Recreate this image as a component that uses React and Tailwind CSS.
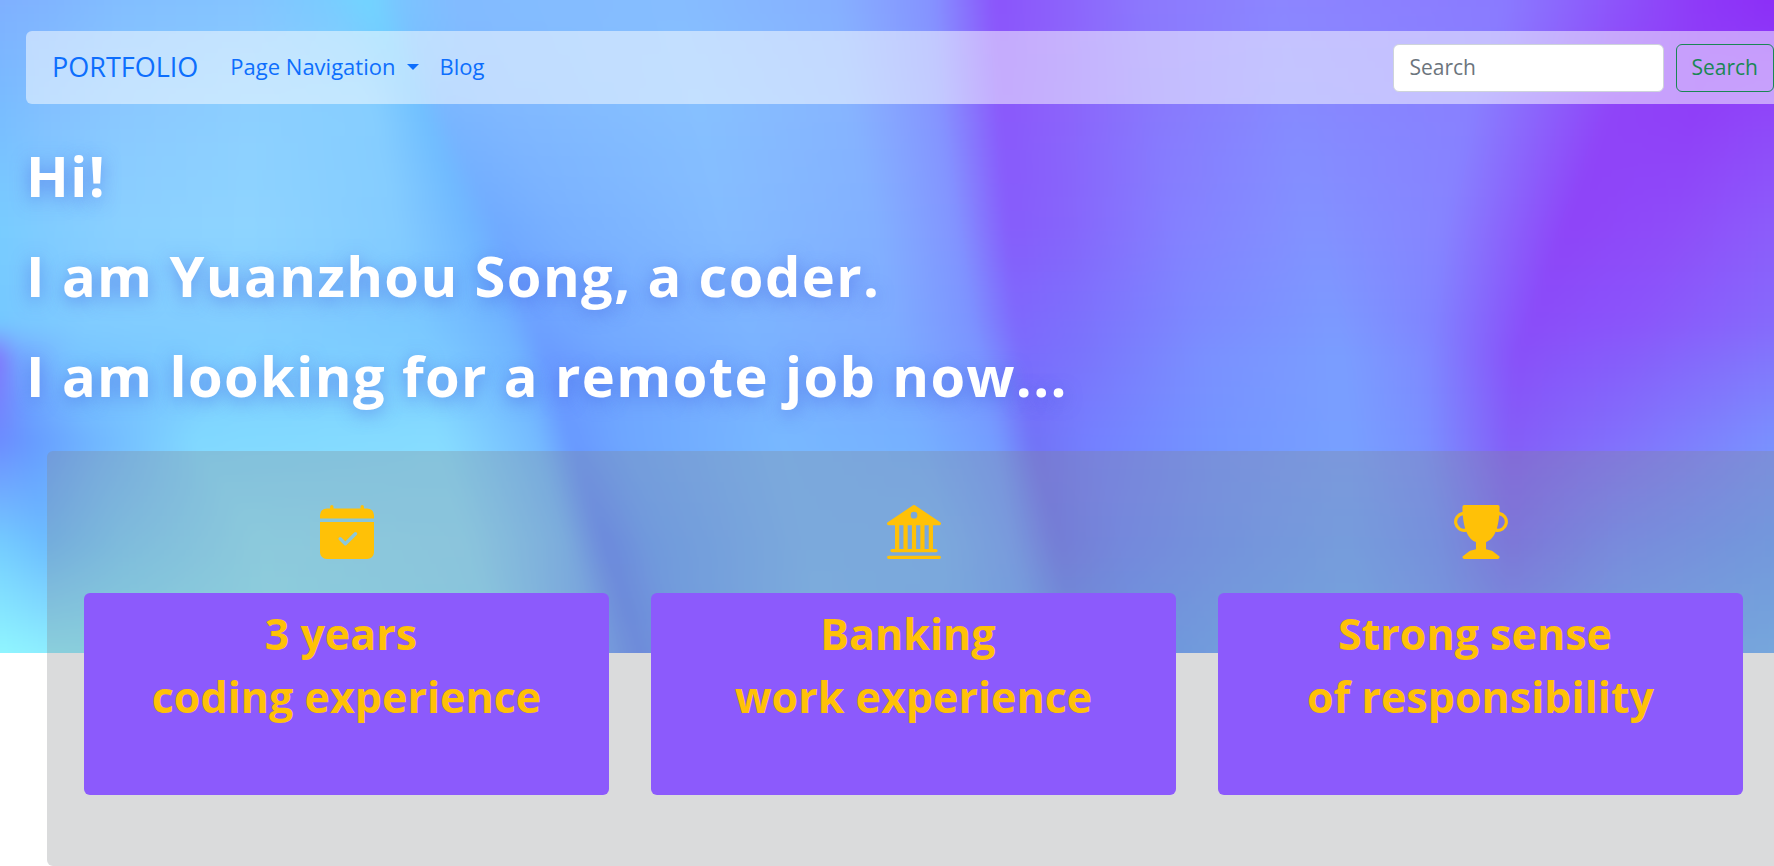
import { BsCalendarCheckFill, BsBank2, BsTrophyFill } from "react-icons/bs";

// Colour rows of the backdrop: [y, [x, r, g, b], ...] in a 1568 x 577 space.
const ROWS = [
  [0, "0 7fb0ff", "40 80b4ff", "110 82beff", "220 84c4ff", "290 7accff", "325 72d5ff", "354 7ac4ff", "400 82bbff", "600 86bdff", "740 86b0ff", "825 8592ff", "880 8b54fb", "930 8c60fb", "1010 8c78fd", "1130 8c86ff", "1330 8a7aff", "1430 8d54fa", "1500 8e3af8", "1568 8c2ef7"],
  [95, "0 78bcff", "40 82c0ff", "110 8ac8ff", "220 8ccfff", "330 86ceff", "372 70c0ff", "392 7ab6ff", "450 80b8ff", "620 86c0ff", "750 86b4ff", "830 8594ff", "885 8a58fb", "935 8b62fb", "1020 8878fd", "1140 868aff", "1300 8880ff", "1425 8f44f8", "1500 8f3ef8", "1568 8f46f9"],
  [200, "0 78ccff", "40 80ccff", "110 8ad0ff", "220 8ed4ff", "350 84ccff", "412 70b8ff", "440 70aaff", "490 78b0ff", "640 84bcff", "775 82b0ff", "845 8294ff", "891 865cfb", "940 8664fb", "1040 8480ff", "1160 8292ff", "1275 8684ff", "1385 8e44f8", "1480 8e4cf9", "1568 8c5cfa"],
  [286, "0 74c8ff", "14 78c8ff", "80 80ccff", "220 82ceff", "370 7ac8ff", "445 70b4ff", "472 6ca0ff", "530 74aaff", "660 7cb4ff", "788 7eacff", "858 7c94ff", "898 7e68fc", "950 7c70fc", "1060 7c8aff", "1180 7c9aff", "1265 8084ff", "1352 8a4cf9", "1450 8a56fa", "1568 866afb"],
  [316, "0 8078fc", "14 74a4ff", "60 78c4ff", "220 80d0ff", "380 7cccff", "460 70b4ff", "482 6a9aff", "540 70a6ff", "670 7ab2ff", "797 7aaaff", "868 7a94ff", "903 7a6cfc", "955 7a74fc", "1065 7a90ff", "1185 7a9eff", "1260 7e8aff", "1340 8850f9", "1440 865efa", "1568 8276fc"],
  [390, "0 6c8cff", "30 669cff", "80 70b4ff", "170 80d8ff", "390 86dcff", "476 74baff", "504 6898ff", "550 6ea6ff", "690 78b8ff", "810 76b0ff", "880 749cff", "912 7272f6", "965 7480ff", "1070 7494ff", "1190 78a0ff", "1260 7a90ff", "1335 845cf8", "1430 8270fc", "1568 7a90fe"],
  [480, "0 74ccff", "40 6cbcff", "110 7cd2ff", "230 90e6ff", "410 8edfff", "500 78bcff", "534 628aff", "575 68a2ff", "710 78b8ff", "830 78b8ff", "895 74a2ff", "934 6e78f6", "990 6e88ff", "1080 6e98ff", "1190 70a6ff", "1270 7094ff", "1335 7a70fa", "1430 748cff", "1568 6ca0ff"],
  [577, "0 90f6ff", "40 8eeeff", "110 8aecff", "240 92eeff", "440 8ae0ff", "530 74aaff", "564 648cfc", "610 6aa4ff", "730 7abeff", "840 76b4ff", "910 6ca8ff", "950 6694f8", "1010 649cff", "1090 6ca8ff", "1200 70b0ff", "1270 72a0ff", "1335 7294ff", "1430 70a8ff", "1568 70b4ff"],
].map(([y, ...stops]) => ({
  y,
  stops: stops.map((s) => {
    const [x, hex] = s.split(" ");
    return [Number(x), ...[0, 2, 4].map((i) => parseInt(hex.slice(i, i + 2), 16))];
  }),
}));

const STOP_COUNT = Math.min(...ROWS.map((r) => r.stops.length));
const STRIP = 6;

function stopsAt(y) {
  const i = Math.min(ROWS.findLastIndex((r) => r.y <= y), ROWS.length - 2);
  const a = ROWS[i];
  const b = ROWS[i + 1];
  const t = Math.min(1, (y - a.y) / (b.y - a.y));
  return Array.from({ length: Math.max(a.stops.length, b.stops.length, STOP_COUNT) }, (_, n) => {
    const from = a.stops[n] ?? a.stops.at(-1);
    const to = b.stops[n] ?? b.stops.at(-1);
    return from.map((v, k) => v + (to[k] - v) * t);
  });
}

const STRIPS = Array.from({ length: Math.ceil(577 / STRIP) }, (_, i) => ({
  y: i * STRIP,
  stops: stopsAt(Math.min(577, i * STRIP + STRIP / 2)),
}));

function Backdrop() {
  return (
    <svg
      className="absolute inset-x-0 top-0 h-[653px] w-full"
      viewBox="0 0 1568 577"
      preserveAspectRatio="none"
      aria-hidden="true"
    >
      <defs>
        <filter id="soften" x="-5%" y="-5%" width="110%" height="110%" colorInterpolationFilters="sRGB">
          <feGaussianBlur stdDeviation="6 6" />
        </filter>
        {STRIPS.map(({ y, stops }) => (
          <linearGradient key={y} id={`strip-${y}`} gradientUnits="userSpaceOnUse" x1="0" x2="1568" y1="0" y2="0">
            {stops.map(([x, r, g, b], n) => (
              <stop key={n} offset={x / 1568} stopColor={`rgb(${Math.round(r)} ${Math.round(g)} ${Math.round(b)})`} />
            ))}
          </linearGradient>
        ))}
      </defs>
      <g filter="url(#soften)">
        <rect x="-40" y="-30" width="1648" height="31" fill="url(#strip-0)" />
        {STRIPS.map(({ y }) => (
          <rect key={y} x="-40" y={y} width="1648" height={STRIP + 1} fill={`url(#strip-${y})`} />
        ))}
        <rect x="-40" y="577" width="1648" height="40" fill="url(#strip-576)" />
      </g>
    </svg>
  );
}

const CARDS = [
  { Icon: BsCalendarCheckFill, first: "3 years", second: "coding experience" },
  { Icon: BsBank2, first: "Banking", second: "work experience" },
  { Icon: BsTrophyFill, first: "Strong sense", second: "of responsibility" },
];

function Navbar() {
  return (
    <nav className="-mr-7 flex h-[73px] items-center rounded-md bg-white/50 pr-7 pl-[26px] text-[#0d6efd]">
      <a href="#top" className="mr-8 text-[27px]">PORTFOLIO</a>
      <button type="button" className="mr-5 flex items-center pb-0.5">
        Page Navigation
        <span className="ml-3 border-x-6 border-t-6 border-x-transparent border-t-current" />
      </button>
      <a href="#blog" className="pb-0.5">Blog</a>
      <form className="ml-auto flex gap-3" onSubmit={(e) => e.preventDefault()}>
        <input
          type="search"
          aria-label="Search"
          placeholder="Search"
          className="h-12 w-[271px] rounded-md border border-[#ced4da] bg-white px-4 pb-0.5 text-[21px] placeholder:text-[#6c757d]"
        />
        <button type="submit" className="h-12 rounded-md border border-[#198754] px-[15px] text-[21px] text-[#198754]">
          Search
        </button>
      </form>
    </nav>
  );
}

export default function App() {
  return (
    <div id="top" className="relative min-h-screen overflow-hidden bg-white font-['Open_Sans','Noto_Sans',sans-serif] text-[22px]">
      <Backdrop />
      <div className="relative pt-[31px] pl-[26px]">
        <Navbar />
        <h1 className="mt-[21px] text-[56px] leading-[100px] font-bold tracking-wide text-white [text-shadow:0_4px_18px_rgb(70_100_225/0.6)]">
          Hi!
          <br />
          I am Yuanzhou Song, a coder.
          <br />
          I am looking for a remote job now...
        </h1>
        <section className="mt-[26px] -mr-1.5 ml-[21px] grid grid-cols-3 gap-[42px] rounded-md bg-[#84878c]/30 px-[37px] pt-[54px] pb-[71px]">
          {CARDS.map(({ Icon, first, second }) => (
            <article key={first} className="flex flex-col items-center">
              <Icon className="size-[54px] text-[#ffc107]" />
              <h2 className="mt-[34px] h-[202px] w-full rounded-md bg-[#8c5afc] pt-[9px] text-center text-[43px] leading-[63px] font-bold text-[#ffc107]">
                {first}&nbsp;
                <br />
                {second}
              </h2>
            </article>
          ))}
        </section>
      </div>
    </div>
  );
}
